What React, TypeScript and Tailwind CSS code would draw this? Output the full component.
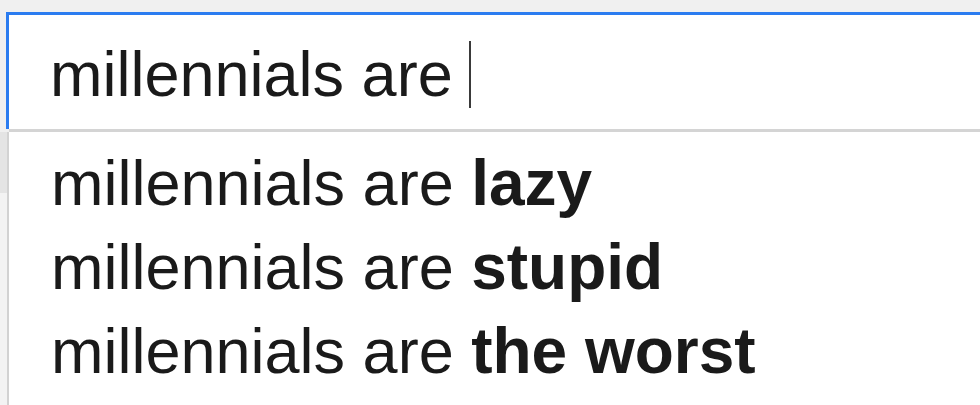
import React from "react";

export default function App() {
  const font = { fontFamily: '"Liberation Sans", Arial, sans-serif' };
  const items = ["lazy", "stupid", "the worst"];
  return (
    <div className="w-[980px] h-[405px] overflow-hidden bg-[#f0f0f0] pt-[12px] flex flex-col" style={font}>
      <div className="ml-[6px] h-[117px] bg-white border-t-[3px] border-l-[3px] border-[#2b7cf0] flex items-center pl-[41px] pt-[5px]">
        <span className="text-[63px] leading-none text-[#1a1a1a]">millennials are</span>
        <span className="ml-[16px] w-[2px] h-[67px] bg-[#3a3a3a]" />
      </div>
      <div className="h-[3px] ml-[9px] bg-[#d4d4d4]" />
      <div className="flex flex-1">
        <div className="w-[7px] flex flex-col">
          <div className="w-[7px] h-[61px] bg-[#e4e4e4]" />
          <div className="flex-1 bg-[#f3f3f3]" />
        </div>
        <div className="w-[2px] bg-[#d2d2d2]" />
        <div className="flex-1 bg-white pl-[42px] pt-[7px] flex flex-col">
          {items.map((t) => (
            <div key={t} className="h-[84px] flex items-baseline pt-[12px] text-[#1a1a1a]">
              <span className="text-[63px] leading-none">millennials are&nbsp;</span>
              <span className="text-[64px] leading-none font-bold">{t}</span>
            </div>
          ))}
        </div>
      </div>
    </div>
  );
}
